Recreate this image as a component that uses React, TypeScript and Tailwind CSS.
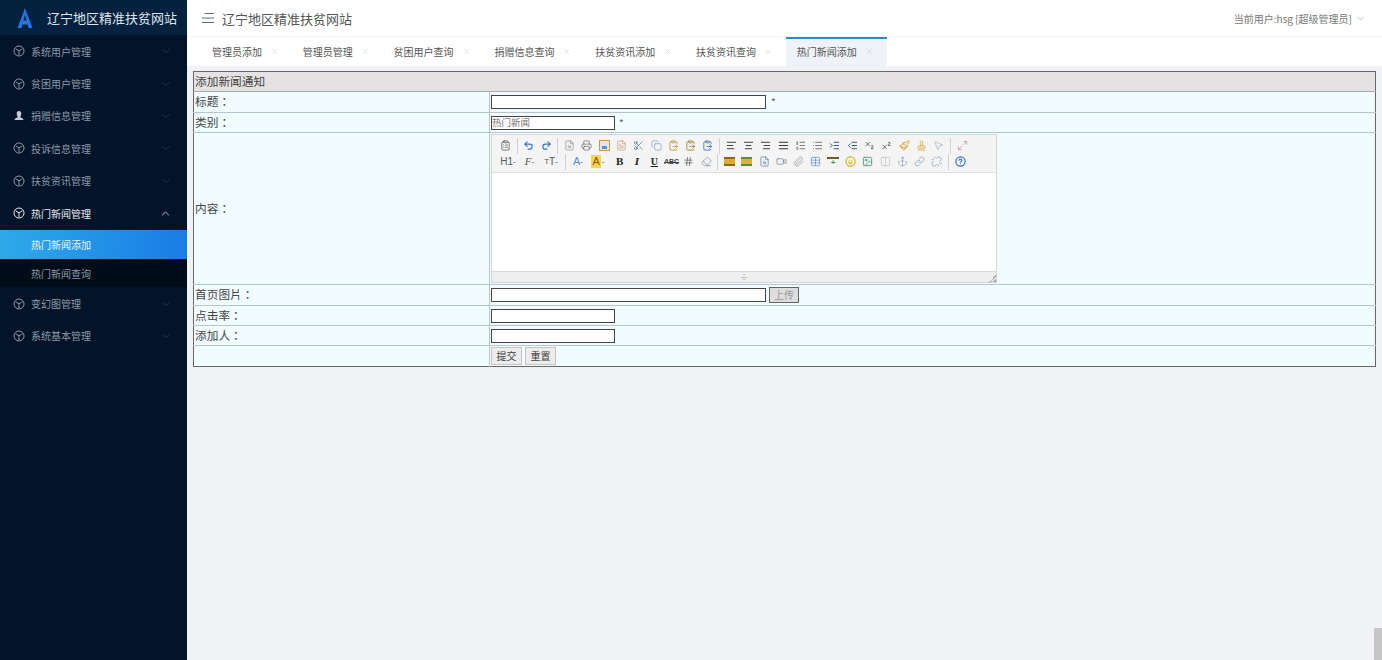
import React from "react";
import {
  AlignCenter,
  AlignJustify,
  AlignLeft,
  AlignRight,
  Anchor,
  ChevronDown,
  ChevronUp,
  ClipboardList,
  ClipboardPaste,
  Copy,
  Eraser,
  FileSearch,
  FileText,
  HelpCircle,
  Image,
  IndentIncrease,
  IndentDecrease,
  Link,
  List,
  ListOrdered,
  MousePointer2,
  Paintbrush,
  Paperclip,
  Printer,
  Redo2,
  Scissors,
  Smile,
  Stamp,
  Subscript,
  Superscript,
  Table,
  Undo2,
  Unlink,
  Video,
  X,
  Hash,
  Columns2,
  Maximize2,
} from "lucide-react";

const menus = [
  { name: "系统用户管理" },
  { name: "贫困用户管理" },
  { name: "捐赠信息管理", user: true },
  { name: "投诉信息管理" },
  { name: "扶贫资讯管理" },
];

const tabs = ["管理员添加", "管理员管理", "贫困用户查询", "捐赠信息查询", "扶贫资讯添加", "扶贫资讯查询", "热门新闻添加"];

const CubeIcon = () => (
  <svg width="12" height="12" viewBox="0 0 12 12" fill="none" stroke="currentColor" strokeWidth="1" className="mr-[5px]">
    <circle cx="6" cy="6" r="5" />
    <path d="M2.600 3.800 6 5.800l3.400-2M6 5.800v4.400" />
  </svg>
);

const MenuRow = ({ name, user, open }: { name: string; user?: boolean; open?: boolean }) => (
  <div className={`flex h-[32.4px] items-center pl-[13px] pr-[15px] text-[10px] ${open ? "text-[#e6ebf0]" : "text-[#8d99a6]"}`}>
    {user ? (
      <svg width="12" height="12" viewBox="0 0 12 12" className="mr-[5px]">
        <path d="M6 1c1.600 0 2.300 1.200 2.300 2.600S7.500 6.500 7.200 7.200c1.300.7 3.300 1 3.300 2.800h-9c0-1.800 2-2.100 3.300-2.800C4.500 6.500 3.700 5 3.700 3.600S4.400 1 6 1z" fill="#c3cbd3" />
      </svg>
    ) : (
      <CubeIcon />
    )}
    <span className="ml-[1px]">{name}</span>
    {open ? (
      <ChevronUp size={13} strokeWidth={1.5} className="ml-auto text-[#d5dbe1]" />
    ) : (
      <ChevronDown size={12} strokeWidth={1} className="ml-auto text-[#4a5a6b]" />
    )}
  </div>
);

const Sidebar = () => (
  <aside className="flex w-[187px] shrink-0 flex-col bg-[#021429]">
    <div className="flex h-[35px] items-center bg-[#04213f] pl-[17px]">
      <svg width="16" height="20" viewBox="0 0 16 20">
        <path d="M8 0 L15.500 20 H11.500 L10.500 16.500 H5.500 L4.500 20 H.5 Z M8 7 L6.500 12.500 H9.500 Z" fill="#2374e1" fillRule="evenodd" />
      </svg>
      <span className="ml-[14px] text-[13px] text-[#dfe6ee]">辽宁地区精准扶贫网站</span>
    </div>
    <div className="flex flex-col">
      {menus.map((m) => (
        <MenuRow key={m.name} name={m.name} user={m.user} />
      ))}
      <MenuRow name="热门新闻管理" open />
      <div className="mt-[0.6px] flex h-[29px] items-center bg-gradient-to-r from-[#2fa9e9] to-[#1a7ce6] pl-[31px] text-[10px] text-[#eef6fd]">
        热门新闻添加
      </div>
      <div className="flex h-[28.400px] items-center bg-[#000c17] pl-[31px] text-[10px] text-[#8d99a6]">热门新闻查询</div>
      <MenuRow name="变幻图管理" />
      <MenuRow name="系统基本管理" />
    </div>
  </aside>
);

const Header = () => (
  <header className="flex h-[37px] shrink-0 items-center border-b border-[#f3f4f6] bg-white pl-[15px] pr-[16px]">
    <svg width="12" height="10" viewBox="0 0 12 10" fill="none" stroke="#66707a" strokeWidth="1">
      <path d="M2.500 .5H12M0 5H12M0 9.500H12" />
    </svg>
    <span className="ml-[8px] text-[13px] leading-[13px] text-[#555]">辽宁地区精准扶贫网站</span>
    <span className="ml-auto text-[10px] text-[#777]">当前用户:hsg [超级管理员]</span>
    <ChevronDown size={11} strokeWidth={1} className="ml-[3px] text-[#777]" />
  </header>
);

const Tabs = () => (
  <div className="flex h-[29px] shrink-0 bg-white pl-[14px]">
    {tabs.map((t, i) => {
      const active = i === tabs.length - 1;
      return (
        <div
          key={t}
          className={`flex items-center pb-[2px] pl-[11px] pr-[12.800px] text-[10px] text-[#555] ${
            active ? "border-t-2 border-[#2d8cc4] bg-[#eff2f8]" : "border-t-2 border-transparent"
          }`}
        >
          <span>{t}</span>
          <X size={9} strokeWidth={1} className="ml-[8px] text-[#b5b9bd]" />
        </div>
      );
    })}
  </div>
);

const Tool = ({ children, w = "w-[17.3px]" }: { children: React.ReactNode; w?: string }) => (
  <div className={`flex h-[16px] shrink-0 items-center justify-center ${w}`}>{children}</div>
);

const Sep = () => (
  <div className="flex h-[16px] w-[6px] shrink-0 justify-center">
    <div className="h-full w-px bg-[#cfd3d6]" />
  </div>
);

const Gi = ({ icon: Icon, color = "#555", w = 1.5 }: { icon: any; color?: string; w?: number }) => (
  <Tool>
    <Icon size={11} color={color} strokeWidth={w} />
  </Tool>
);

const Toolbar = () => (
  <div className="flex h-[37px] shrink-0 flex-col justify-center bg-[#f4f4f4] pl-[5px] font-['Liberation_Sans',sans-serif]">
    <div className="flex h-[16px] items-center">
      <Gi icon={ClipboardList} color="#444" />
      <Sep />
      <Gi icon={Undo2} color="#3577b8" w={2.5} />
      <Gi icon={Redo2} color="#3577b8" w={2.5} />
      <Sep />
      <Gi icon={FileSearch} color="#8a8f95" />
      <Gi icon={Printer} color="#666" />
      <Tool>
        <div className="flex h-[11px] w-[11px] items-end justify-center border border-[#c99a3c] bg-[#dbe6f3]">
          <div className="mb-[1px] h-[3px] w-[5px] bg-[#6c8fb8]" />
        </div>
      </Tool>
      <Gi icon={FileText} color="#c9936a" />
      <Gi icon={Scissors} color="#4b6a91" />
      <Gi icon={Copy} color="#7b9fc4" />
      <Gi icon={ClipboardPaste} color="#c39a45" w={2} />
      <Gi icon={ClipboardPaste} color="#a9863f" w={2} />
      <Gi icon={ClipboardPaste} color="#4b78a8" w={2} />
      <Sep />
      <Gi icon={AlignLeft} color="#333" w={2} />
      <Gi icon={AlignCenter} color="#333" w={2} />
      <Gi icon={AlignRight} color="#333" w={2} />
      <Gi icon={AlignJustify} color="#333" w={2.5} />
      <Gi icon={ListOrdered} color="#444" />
      <Gi icon={List} color="#444" />
      <Gi icon={IndentIncrease} color="#2d4f6b" w={2} />
      <Gi icon={IndentDecrease} color="#2d4f6b" w={2} />
      <Gi icon={Subscript} color="#333" />
      <Gi icon={Superscript} color="#333" />
      <Gi icon={Paintbrush} color="#d99a1f" w={2} />
      <Gi icon={Stamp} color="#d8b04a" w={2} />
      <Gi icon={MousePointer2} color="#9db0c6" />
      <Sep />
      <Gi icon={Maximize2} color="#b98a8a" />
    </div>
    <div className="flex h-[16px] items-center text-[#555]">
      <Tool w="w-[22px]">
        <span className="text-[10px] text-[#4d5966]">H1</span>
        <span className="text-[8px]">-</span>
      </Tool>
      <Tool w="w-[21px]">
        <span className="font-['Liberation_Serif',serif] text-[11px] italic">F</span>
        <span className="text-[8px]">-</span>
      </Tool>
      <Tool w="w-[22px]">
        <span className="text-[8px]">T</span>
        <span className="text-[10px]">T</span>
        <span className="text-[8px]">-</span>
      </Tool>
      <Sep />
      <Tool w="w-[20px]">
        <span className="text-[11px] text-[#5b8cc4]">A</span>
        <span className="text-[8px]">-</span>
      </Tool>
      <Tool w="w-[20px]">
        <span className="bg-[#ffd34d] px-[1px] text-[11px] leading-[13px] text-[#7a5b12]">A</span>
        <span className="ml-[1px] text-[8px]">-</span>
      </Tool>
      <div className="w-[3px] shrink-0" />
      <Tool>
        <span className="font-['Liberation_Serif',serif] text-[11px] font-bold text-[#222]">B</span>
      </Tool>
      <Tool>
        <span className="font-['Liberation_Serif',serif] text-[11px] font-bold italic text-[#222]">I</span>
      </Tool>
      <Tool>
        <span className="font-['Liberation_Serif',serif] text-[10px] font-bold text-[#222] underline">U</span>
      </Tool>
      <Tool>
        <span className="text-[7px] font-bold text-[#444] line-through">ABC</span>
      </Tool>
      <Gi icon={Hash} color="#555" />
      <Gi icon={Eraser} color="#7d8a96" />
      <Sep />
      <Tool>
        <div className="h-[9px] w-[11px] border-y-2 border-[#8a6a1a] bg-[#e3a92c]" />
      </Tool>
      <Tool>
        <div className="h-[9px] w-[11px] border-y-2 border-[#5f8a3a] bg-[#d9b23f]" />
      </Tool>
      <Gi icon={FileSearch} color="#5e7d99" />
      <Gi icon={Video} color="#6c7f92" />
      <Gi icon={Paperclip} color="#8d9499" />
      <Gi icon={Table} color="#5f8fc4" />
      <Tool>
        <div className="flex w-[12px] flex-col items-center">
          <div className="h-[2px] w-full bg-[#6b5a2a]" />
          <span className="text-[8px] font-bold leading-[8px] text-[#3f9d4a]">+</span>
        </div>
      </Tool>
      <Gi icon={Smile} color="#e4a91d" w={2.5} />
      <Gi icon={Image} color="#4f9a7e" w={2} />
      <Gi icon={Columns2} color="#b6bcc2" />
      <Gi icon={Anchor} color="#8fa1b3" />
      <Gi icon={Link} color="#8297ad" />
      <Gi icon={Unlink} color="#8297ad" />
      <Sep />
      <Gi icon={HelpCircle} color="#2f6fc0" w={2.5} />
    </div>
  </div>
);

const Editor = () => (
  <div className="flex h-[149px] w-[506px] flex-col border border-[#d3d6d8] bg-white">
    <Toolbar />
    <div className="flex-1 border-t border-[#dcdfe1]" />
    <div className="relative flex h-[11px] shrink-0 items-center justify-center border-t border-[#d8d8d8] bg-[#efefef]">
      <span className="text-[8px] leading-[8px] text-[#999]">÷</span>
      <div className="absolute bottom-0 right-0 h-[7px] w-[7px] bg-[linear-gradient(135deg,transparent_50%,#999_50%,transparent_70%,#999_85%)]" />
    </div>
  </div>
);

const cellL = "border-b border-[#b9c6c9] pb-[2px] pl-[1px] text-[11.700px] text-[#444] align-middle font-['Noto_Sans_CJK_TC','Noto_Sans_CJK_SC',sans-serif]";
const cellR = "border-b border-l border-[#b9c6c9] pl-[1px] align-middle";
const textInput = "box-border block h-[14px] border border-[#444] bg-white";

const FormTable = () => (
  <table className="w-[1183px] table-fixed border-collapse border border-[#666] bg-[#f0fcff] text-[11.700px] leading-none">
    <colgroup>
      <col className="w-[296px]" />
      <col />
    </colgroup>
    <tbody>
      <tr className="h-[20px] bg-[#e4e2e2]">
        <td colSpan={2} className="border-b border-[#a9a9a9] pb-[2px] pl-[1px] text-[#444]">
          添加新闻通知
        </td>
      </tr>
      <tr className="h-[21px]">
        <td className={cellL}>标题：</td>
        <td className={cellR}>
          <div className="flex items-center">
            <div className={`${textInput} w-[275px]`} />
            <span className="ml-[5px] text-[10px] text-[#555]">*</span>
          </div>
        </td>
      </tr>
      <tr className="h-[20px]">
        <td className={cellL}>类别：</td>
        <td className={cellR}>
          <div className="flex items-center">
            <div className={`${textInput} flex w-[124px] items-center text-[9.500px] text-[#777]`}>热门新闻</div>
            <span className="ml-[4px] text-[10px] text-[#555]">*</span>
          </div>
        </td>
      </tr>
      <tr className="h-[152px]">
        <td className={cellL}>内容：</td>
        <td className={cellR}>
          <Editor />
        </td>
      </tr>
      <tr className="h-[21px]">
        <td className={cellL}>首页图片：</td>
        <td className={cellR}>
          <div className="flex items-center">
            <div className={`${textInput} w-[275px]`} />
            <div className="ml-[3px] flex h-[16px] w-[30px] items-center justify-center border border-[#666] bg-[#ddd] text-[10px] text-[#999]">
              上传
            </div>
          </div>
        </td>
      </tr>
      <tr className="h-[20px]">
        <td className={cellL}>点击率：</td>
        <td className={cellR}>
          <div className={`${textInput} w-[124px]`} />
        </td>
      </tr>
      <tr className="h-[20px]">
        <td className={cellL}>添加人：</td>
        <td className={cellR}>
          <div className={`${textInput} w-[124px]`} />
        </td>
      </tr>
      <tr className="h-[21px]">
        <td className="pl-[2px]" />
        <td className="border-l border-[#b9c6c9] pl-[1px] align-middle">
          <div className="flex gap-[3px]">
            <div className="flex h-[18px] w-[31px] items-center justify-center border border-[#c4c4c4] bg-[#ececec] text-[10px] text-[#444]">
              提交
            </div>
            <div className="flex h-[18px] w-[31px] items-center justify-center border border-[#c4c4c4] bg-[#ececec] text-[10px] text-[#444]">
              重置
            </div>
          </div>
        </td>
      </tr>
    </tbody>
  </table>
);

export default function App() {
  return (
    <div className="relative flex h-[660px] w-[1382px] overflow-hidden bg-[#f1f2f6] font-['Noto_Sans_CJK_SC','Liberation_Sans',sans-serif]">
      <Sidebar />
      <main className="flex min-w-0 flex-1 flex-col">
        <Header />
        <Tabs />
        <div className="pl-[6px] pt-[5px]">
          <FormTable />
        </div>
      </main>
      <div className="absolute bottom-0 right-0 h-[32px] w-[8px] bg-[#c6c6c6]" />
    </div>
  );
}
